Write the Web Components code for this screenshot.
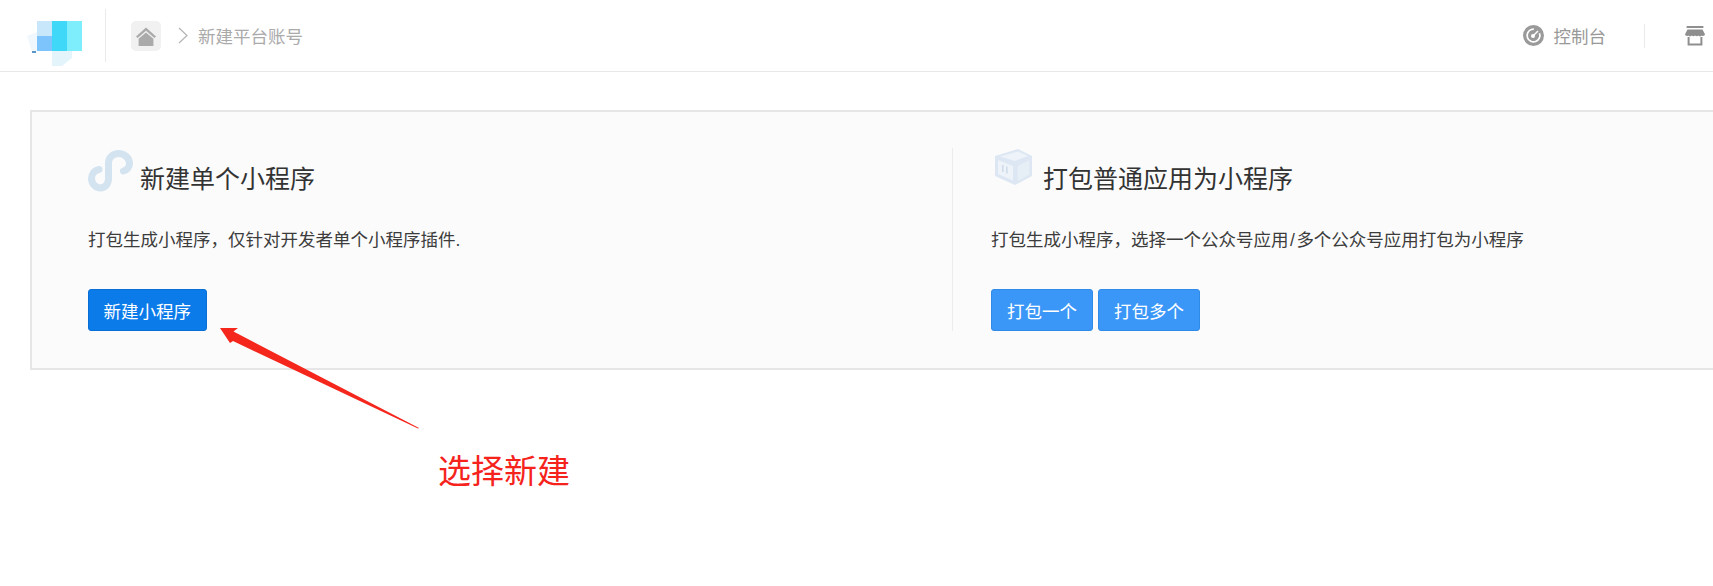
<!DOCTYPE html>
<html lang="zh-CN">
<head>
<meta charset="utf-8">
<title>新建平台账号</title>
<style>
html,body{margin:0;padding:0;background:#fff;overflow:hidden;width:1713px;height:586px}
body{position:relative;font-family:"Liberation Sans","Noto Sans CJK SC",sans-serif;font-size:17.5px;color:#333}
.sl{margin:0 1.5px}
</style>
</head>
<body>
<app-header>
  <span slot="crumb">新建平台账号</span>
  <span slot="console">控制台</span>
</app-header>
<create-panel>
  <create-col slot="left" heading="新建单个小程序" kind="mini">
    <span slot="desc">打包生成小程序，仅针对开发者单个小程序插件.</span>
    <ui-button variant="primary">新建小程序</ui-button>
  </create-col>
  <create-col slot="right" heading="打包普通应用为小程序" kind="box">
    <span slot="desc">打包生成小程序，选择一个公众号应用<span class="sl">/</span>多个公众号应用打包为小程序</span>
    <ui-button>打包一个</ui-button>
    <ui-button>打包多个</ui-button>
  </create-col>
</create-panel>
<arrow-note>选择新建</arrow-note>
<script>
function def(name, html, init){
  customElements.define(name, class extends HTMLElement{
    constructor(){super();this.attachShadow({mode:'open'}).innerHTML=html;}
    connectedCallback(){ if(init) init(this); }
  });
}
def('app-header',`<style>
:host{display:flex;align-items:center;box-sizing:border-box;height:72px;border-bottom:1px solid #e8e8e8;padding:0 8px 0 25px;background:#fff}
.sep{flex:none;width:1px;background:#eaeaea}
.s1{height:53px;margin:0 25px 0 20px}
.home{flex:none;width:30px;height:30px;border-radius:5px;background:#f1f1f1;display:flex;align-items:center;justify-content:center}
.chev{flex:none;margin:0 10px 0 17px}
.crumb{color:#aaa;white-space:nowrap}
.right{margin-left:auto;display:flex;align-items:center}
.console{color:#999;margin:0 38px 0 10px;white-space:nowrap}
.s2{height:24px;margin-right:40px}
svg{display:block;flex:none}
</style>
<svg width="60" height="60" viewBox="25 6 60 60">
<defs><filter id="b" x="-10%" y="-10%" width="120%" height="120%"><feGaussianBlur stdDeviation="0.5"/></filter></defs>
<g filter="url(#b)">
<path d="M27 36 37 32V52H32Z" fill="#f1f8fd"/>
<path d="M52 51H72V58L62 66H52Z" fill="#e3f4fb"/>
<rect x="37" y="21" width="15" height="15" fill="#c9e7fb"/><rect x="37" y="36" width="15" height="15" fill="#7cc4fb"/>
<rect x="52" y="21" width="15" height="30" fill="#3fd8f9"/><rect x="67" y="21" width="15" height="30" fill="#7eeefc"/>
<rect x="32" y="51" width="4" height="2" fill="#5a97c8"/></g>
</svg>
<span class="sep s1"></span>
<span class="home"><svg width="24" height="24" viewBox="0 0 24 24"><path d="M12 3.600 22 12.400 20.400 14 12 6.700 3.600 14 2 12.400Z" fill="#aaa"/><path d="M12 8.400 19.400 14.800V22H4.600V14.800Z" fill="#aaa"/></svg></span>
<svg class="chev" width="10" height="17" viewBox="0 0 10 17"><path d="M1 1 9 8.500 1 16" fill="none" stroke="#b4b4b4" stroke-width="1.200"/></svg>
<span class="crumb"><slot name="crumb"></slot></span>
<span class="right">
<svg width="21" height="21" viewBox="0 0 21 21"><circle cx="10.500" cy="10.500" r="10.500" fill="#9a9a9a"/><circle cx="10.500" cy="10.500" r="6.400" fill="none" stroke="#fff" stroke-width="1.700" stroke-dasharray="32 8" transform="rotate(-20 10.500 10.500)"/><circle cx="10" cy="11" r="2" fill="#fff"/><path d="M10 11 15 6" stroke="#fff" stroke-width="1.400"/></svg>
<span class="console"><slot name="console"></slot></span>
<span class="sep s2"></span>
<svg width="20" height="20" viewBox="0 0 20 20"><rect x="1.600" y="0" width="16.800" height="2" fill="#8f8f8f"/><path d="M2.500 3.400H17.500L20 8.200A2 2 0 0 1 16.700 9.400 2.400 2.400 0 0 1 13.300 9.400 2.400 2.400 0 0 1 10 9.400 2.400 2.400 0 0 1 6.700 9.400 2.400 2.400 0 0 1 3.300 9.400 2 2 0 0 1 0 8.200Z" fill="#8f8f8f"/><path d="M2.600 11V19.600H17.400V11H15.400V17.400H4.600V11Z" fill="#8f8f8f"/></svg>
</span>`);
def('create-panel',`<style>
:host{display:block;box-sizing:border-box;width:1800px;margin:38px 0 0 30px;border:2px solid #e6e6e6;background:#fbfbfb;padding:36px 0 37px 56px}
.grid{display:grid;grid-template-columns:864px 1fr}
.r{border-left:1px solid #ececec;padding-left:38px}
</style>
<div class="grid"><div><slot name="left"></slot></div><div class="r"><slot name="right"></slot></div></div>`);
const ICONS={
mini:`<svg style="margin-right:7px" width="45" height="42" viewBox="88 150 45 42"><path d="M99 169.500C94 170.500 91.500 174.500 91.500 178.500C91.500 184 96 188 100.500 188C105 188 108.500 184 108.500 178.500V163C108.500 157.500 113 153.500 118.500 153.500C124.500 153.500 129.500 158 129.500 163.500C129.500 167 127 170 123.500 171" fill="none" stroke="#d3e3f0" stroke-width="7" stroke-linecap="round"/></svg>`,
box:`<svg style="margin:0 11px 0 3px" width="38" height="38" viewBox="0 0 38 38"><path d="M1 8 24 1 38 8V28L21 37 1 28Z" fill="#dce7f3"/><path d="M4 12 19 18V32.500L4 26Z" fill="#eef3f9"/><path d="M6 8.500 24 3.500 34 8 21 13Z" fill="#eef3f9"/><path d="M23.500 18 35.500 12V26.500L23.500 33Z" fill="#e6eef6"/><path d="M8 17h1.600v7H8ZM12 18.500h1.600v7H12Z" fill="#cfdcea"/></svg>`};
def('create-col',`<style>
:host{display:block}
.t{display:flex;align-items:center;height:62px;margin-bottom:13px}
.t svg{display:block;flex:none;align-self:flex-start;margin-top:2px}
h2{margin:0;font-weight:400;font-size:25px;line-height:62px;color:#333;white-space:nowrap}
.d{line-height:34px;height:34px;margin-bottom:32px;color:#3c3c3c;white-space:nowrap}
.b{display:flex;gap:5px}
</style>
<div class="t" id="t"><h2 id="h"></h2></div>
<div class="d"><slot name="desc"></slot></div>
<div class="b"><slot></slot></div>`, (el)=>{
  const r=el.shadowRoot;
  r.getElementById('h').textContent=el.getAttribute('heading');
  r.getElementById('t').insertAdjacentHTML('afterbegin',ICONS[el.getAttribute('kind')]);
});
def('ui-button',`<style>
:host{display:inline-flex;align-items:center;justify-content:center;box-sizing:border-box;height:42px;padding:0 15px;border-radius:3px;color:#fff;background:#3a97f8;border:1px solid #2f8ae8;white-space:nowrap;font-size:17.5px}
:host([variant=primary]){background:#0b7bea;border-color:#0a6fd4;padding:0 14.500px}
</style><slot></slot>`);
def('arrow-note',`<style>
:host{display:block;position:absolute;left:0;top:0;width:0;height:0}
svg{position:absolute;left:0;top:0;overflow:visible}
.l{position:absolute;left:438px;top:450px;font-size:33px;line-height:44px;color:#f5231c;white-space:nowrap}
</style>
<svg width="1" height="1"><polygon points="220,328 238,328 233.500,331.500 419,428 418,428.500 233,341 230,343" fill="#f5261c"/></svg>
<span class="l"><slot></slot></span>`);
</script>
</body>
</html>
